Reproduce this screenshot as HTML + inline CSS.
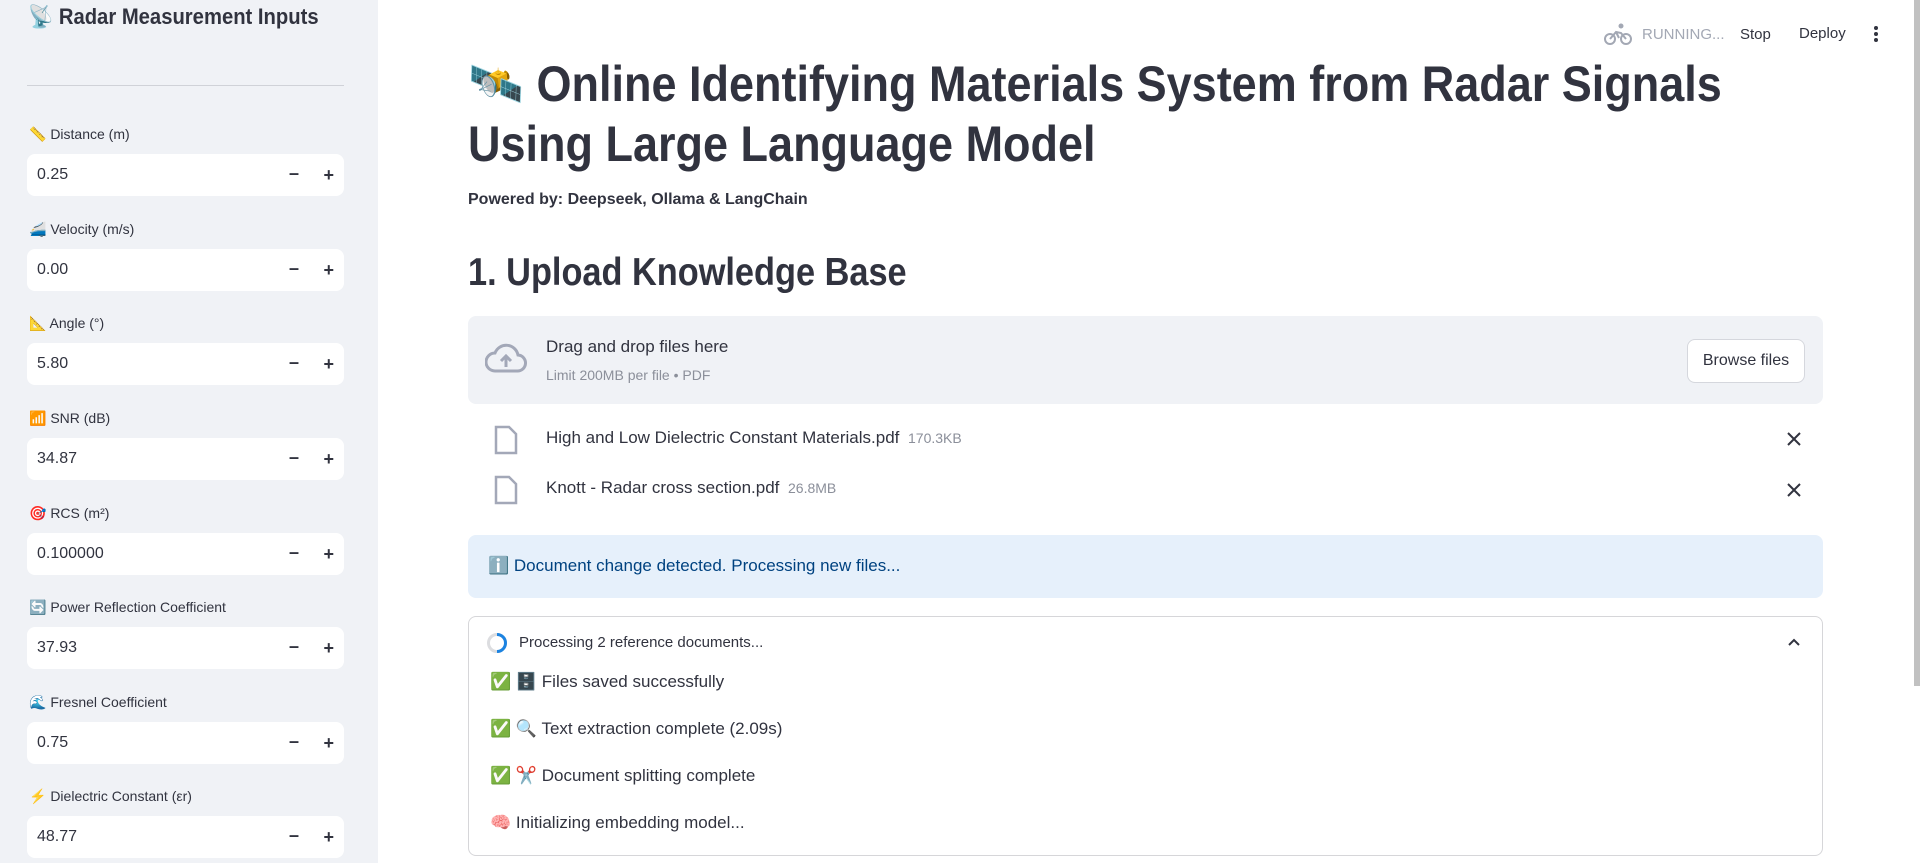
<!DOCTYPE html>
<html><head><meta charset="utf-8">
<style>
*{box-sizing:border-box;margin:0;padding:0}
body{width:1920px;height:863px;overflow:hidden;background:#fff;font-family:"Liberation Sans","Noto Sans CJK SC",sans-serif;color:#31333f;position:relative}
.side{position:absolute;left:0;top:0;width:378px;height:863px;background:#f0f2f6}
.stitle{position:absolute;left:28px;top:4px;font-size:22px;font-weight:bold;white-space:nowrap;transform:scaleX(.92);transform-origin:left}
.hr{position:absolute;left:27px;top:85px;width:317px;height:1px;background:#d0d2d8}
.lab{position:absolute;left:29px;font-size:14px;color:#31333f;white-space:nowrap}
.inp{position:absolute;left:27px;width:317px;height:42px;background:#fff;border-radius:8px;font-size:16px;padding:0 0 0 10px;line-height:42px}
.inp .m{position:absolute;right:45px;top:-2px;font-weight:bold;font-size:18px}
.inp .p{position:absolute;right:10px;top:0;font-weight:bold;font-size:18px}
.sx{display:inline-block;transform-origin:left;white-space:nowrap}
.abs{position:absolute}
.t{font-size:17px;white-space:nowrap}
</style></head><body>
<div class="side">
 <div class="stitle">📡 Radar Measurement Inputs</div>
 <div class="hr"></div>
 <div class="lab" style="top:126px">📏 Distance (m)</div>
 <div class="inp" style="top:154px">0.25<span class="m">–</span><span class="p">+</span></div>
 <div class="lab" style="top:221px">🚄 Velocity (m/s)</div>
 <div class="inp" style="top:249px">0.00<span class="m">–</span><span class="p">+</span></div>
 <div class="lab" style="top:315px">📐 Angle (°)</div>
 <div class="inp" style="top:343px">5.80<span class="m">–</span><span class="p">+</span></div>
 <div class="lab" style="top:410px">📶 SNR (dB)</div>
 <div class="inp" style="top:438px">34.87<span class="m">–</span><span class="p">+</span></div>
 <div class="lab" style="top:505px">🎯 RCS (m²)</div>
 <div class="inp" style="top:533px">0.100000<span class="m">–</span><span class="p">+</span></div>
 <div class="lab" style="top:599px">🔄 Power Reflection Coefficient</div>
 <div class="inp" style="top:627px">37.93<span class="m">–</span><span class="p">+</span></div>
 <div class="lab" style="top:694px">🌊 Fresnel Coefficient</div>
 <div class="inp" style="top:722px">0.75<span class="m">–</span><span class="p">+</span></div>
 <div class="lab" style="top:788px">⚡ Dielectric Constant (εr)</div>
 <div class="inp" style="top:816px">48.77<span class="m">–</span><span class="p">+</span></div>
</div>

<!-- header -->
<svg class="abs" style="left:1604px;top:22px" width="28" height="24" viewBox="0 0 28 24" fill="none" stroke="#a3a8b4" stroke-width="2"><circle cx="6" cy="17" r="5"/><circle cx="22" cy="17" r="5"/><path d="M6 17l6-7 5 1 5 6M12 10l3 6"/><circle cx="17" cy="4" r="2.5" fill="#a3a8b4" stroke="none"/></svg>
<div class="abs" style="left:1642px;top:26px;font-size:15px;color:#a3a8b4">RUNNING...</div>
<div class="abs" style="left:1740px;top:26px;font-size:15px">Stop</div>
<div class="abs" style="left:1799px;top:25px;font-size:15px">Deploy</div>
<svg class="abs" style="left:1871px;top:25px" width="10" height="20"><circle cx="5" cy="3" r="2" fill="#31333f"/><circle cx="5" cy="9" r="2" fill="#31333f"/><circle cx="5" cy="15" r="2" fill="#31333f"/></svg>
<div class="abs" style="left:1914px;top:0;width:6px;height:686px;background:#c1c1c1"></div>

<!-- title -->
<div class="abs" style="left:468px;top:54px;font-size:50px;font-weight:bold;line-height:60px;color:#31333f">
 <div class="sx" style="transform:scaleX(.9)">🛰️ Online Identifying Materials System from Radar Signals</div><br>
 <div class="sx" style="transform:scaleX(.9)">Using Large Language Model</div>
</div>
<div class="abs" style="left:468px;top:191px;font-size:16px;font-weight:bold;white-space:nowrap">Powered by: Deepseek, Ollama &amp; LangChain</div>
<div class="abs" style="left:468px;top:250px;font-size:39px;line-height:46px;font-weight:bold"><span class="sx" style="transform:scaleX(.88)">1. Upload Knowledge Base</span></div>

<!-- dropzone -->
<div class="abs" style="left:468px;top:316px;width:1355px;height:88px;background:#f0f2f6;border-radius:8px"></div>
<svg class="abs" style="left:485px;top:343px" width="42" height="32" viewBox="0 0 42 32" fill="none" stroke="#a3a8b8" stroke-width="3"><path d="M10 28h22a8 8 0 0 0 1-16A12 12 0 0 0 10 10a9 9 0 0 0 0 18z"/><path d="M21 24V13M16 18l5-5 5 5" stroke-width="3"/></svg>
<div class="abs t" style="left:546px;top:337px">Drag and drop files here</div>
<div class="abs" style="left:546px;top:367px;font-size:14px;color:#8b8f9a">Limit 200MB per file • PDF</div>
<div class="abs" style="left:1687px;top:339px;width:118px;height:44px;background:#fff;border:1px solid #d5d7dd;border-radius:8px;font-size:16px;line-height:42px;text-align:center">Browse files</div>

<!-- files -->
<svg class="abs" style="left:493px;top:425px" width="26" height="30" viewBox="0 0 26 30" fill="none" stroke="#a3a8b8" stroke-width="2.5"><path d="M3 2h13l7 7v19H3z"/></svg>
<div class="abs t" style="left:546px;top:428px">High and Low Dielectric Constant Materials.pdf <small style="font-size:14px;color:#8b8f9a">&nbsp;170.3KB</small></div>
<svg class="abs" style="left:1786px;top:431px" width="16" height="16" stroke="#31333f" stroke-width="2"><path d="M2 2l12 12M14 2L2 14"/></svg>
<svg class="abs" style="left:493px;top:475px" width="26" height="30" viewBox="0 0 26 30" fill="none" stroke="#a3a8b8" stroke-width="2.5"><path d="M3 2h13l7 7v19H3z"/></svg>
<div class="abs t" style="left:546px;top:478px">Knott - Radar cross section.pdf <small style="font-size:14px;color:#8b8f9a">&nbsp;26.8MB</small></div>
<svg class="abs" style="left:1786px;top:482px" width="16" height="16" stroke="#31333f" stroke-width="2"><path d="M2 2l12 12M14 2L2 14"/></svg>

<!-- info -->
<div class="abs" style="left:468px;top:535px;width:1355px;height:63px;background:#e6f0fb;border-radius:8px"></div>
<div class="abs t" style="left:488px;top:556px;color:#004280">ℹ️ Document change detected. Processing new files...</div>

<!-- expander -->
<div class="abs" style="left:468px;top:616px;width:1355px;height:240px;border:1px solid #d6d6d9;border-radius:8px"></div>
<svg class="abs" style="left:486px;top:632px" width="22" height="22" fill="none" stroke-width="3"><circle cx="11" cy="11" r="8.5" stroke="#dcdde0"/><path d="M11 2.5a8.5 8.5 0 0 1 0 17" stroke="#1c83e1"/></svg>
<div class="abs" style="left:519px;top:634px;font-size:15px;white-space:nowrap">Processing 2 reference documents...</div>
<svg class="abs" style="left:1787px;top:637px" width="14" height="10" fill="none" stroke="#31333f" stroke-width="2"><path d="M2 8l5-5 5 5"/></svg>
<div class="abs t" style="left:490px;top:672px">✅ 🗄️ Files saved successfully</div>
<div class="abs t" style="left:490px;top:719px">✅ 🔍 Text extraction complete (2.09s)</div>
<div class="abs t" style="left:490px;top:766px">✅ ✂️ Document splitting complete</div>
<div class="abs t" style="left:490px;top:813px">🧠 Initializing embedding model...</div>
</body></html>
